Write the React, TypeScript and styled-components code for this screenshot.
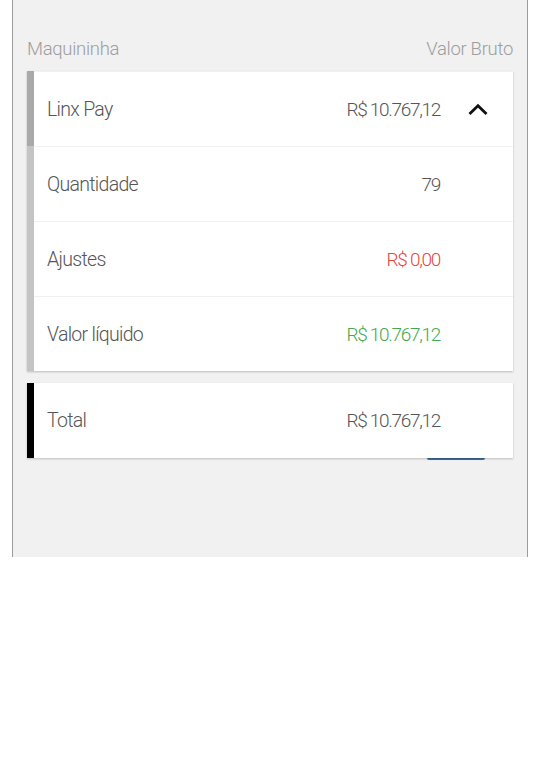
import React, { useState } from 'react';
import styled, { createGlobalStyle } from 'styled-components';

const GlobalStyle = createGlobalStyle`
    body {
        margin: 0;
        background: #ffffff;
        font-family: 'Roboto', 'Liberation Sans', sans-serif;
    }
`;

const Frame = styled.div`
    box-sizing: border-box;
    height: 557px;
    margin: 0 12px;
    padding: 36px 14px 0 14px;
    background-color: #f1f1f1;
    border-left: 1.5px solid #9c9c9c;
    border-right: 1.5px solid #9c9c9c;
`;

const Header = styled.div`
    display: flex;
    justify-content: space-between;
    align-items: center;
    height: 26px;
    margin-bottom: 9px;
    font-size: 18.5px;
    font-weight: 300;
    color: #9d9d9d;
    letter-spacing: -0.3px;
`;

const Card = styled.div<{ $accent: string }>`
    position: relative;
    background: #ffffff;
    border-left: 7px solid ${(p) => p.$accent};
    box-shadow: 0 1px 2px rgba(0, 0, 0, 0.22);
    margin-bottom: 12px;
`;

const HeadMarker = styled.div`
    position: absolute;
    left: -7px;
    top: 0;
    width: 7px;
    height: 75px;
    background: #a9a9a9;
`;

const Row = styled.div<{ $clickable?: boolean }>`
    box-sizing: border-box;
    display: grid;
    grid-template-columns: 1fr auto 73px;
    align-items: center;
    height: 75px;
    padding-left: 13px;
    border-top: 1px solid #f1f1f1;
    cursor: ${(p) => (p.$clickable ? 'pointer' : 'default')};

    &:first-child {
        border-top: none;
    }
`;

const Label = styled.span`
    font-size: 19.5px;
    font-weight: 300;
    color: #555555;
    letter-spacing: -0.7px;
`;

const Value = styled.span<{ $color?: string }>`
    font-size: 19px;
    font-weight: 300;
    color: ${(p) => p.$color || '#555555'};
    letter-spacing: -1.3px;
    text-align: right;
`;

const Toggle = styled.span`
    display: flex;
    justify-content: center;
    align-items: center;
    padding-left: 2px;
`;

const HiddenButton = styled.div`
    position: absolute;
    right: 28px;
    bottom: -2px;
    width: 58px;
    height: 2px;
    background: #3d6e97;
    border-radius: 0 0 3px 3px;
    z-index: -1;
`;

const Stack = styled.div`
    position: relative;
    z-index: 0;
`;

function Chevron({ open }: { open: boolean }) {
    return (
        <svg width="20" height="12" viewBox="0 0 20 12" style={{ transform: open ? 'none' : 'rotate(180deg)' }}>
            <path d="M2.5 10 L10 2.8 L17.5 10" fill="none" stroke="#111" strokeWidth="2.8" strokeLinecap="square" />
        </svg>
    );
}

export default function App(): JSX.Element {
    const [open, setOpen] = useState(true);

    return (
        <>
            <GlobalStyle />
            <Frame>
                <Header>
                    <span>Maquininha</span>
                    <span>Valor Bruto</span>
                </Header>
                <Stack>
                    <Card $accent='#c4c4c4'>
                        <HeadMarker />
                        <Row $clickable onClick={() => setOpen(!open)}>
                            <Label>Linx Pay</Label>
                            <Value>R$ 10.767,12</Value>
                            <Toggle>
                                <Chevron open={open} />
                            </Toggle>
                        </Row>
                        {open && (
                            <>
                                <Row>
                                    <Label>Quantidade</Label>
                                    <Value>79</Value>
                                    <span />
                                </Row>
                                <Row>
                                    <Label>Ajustes</Label>
                                    <Value $color='#e4473f'>R$ 0,00</Value>
                                    <span />
                                </Row>
                                <Row>
                                    <Label>Valor líquido</Label>
                                    <Value $color='#45a84c'>R$ 10.767,12</Value>
                                    <span />
                                </Row>
                            </>
                        )}
                    </Card>
                    <Card $accent='#000000'>
                        <Row>
                            <Label>Total</Label>
                            <Value>R$ 10.767,12</Value>
                            <span />
                        </Row>
                        <HiddenButton />
                    </Card>
                </Stack>
            </Frame>
        </>
    );
}
